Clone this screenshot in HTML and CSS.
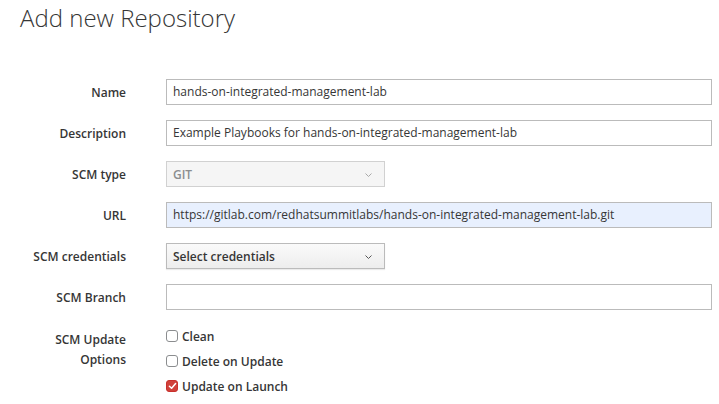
FILE: index.html
```html
<!DOCTYPE html>
<html>
<head>
<meta charset="utf-8">
<link rel="stylesheet" href="styles.css">
</head>
<body>
<h1 class="title">Add new Repository</h1>
<form class="form">
  <div class="row">
    <label class="label">Name</label>
    <div class="field"><div class="input wide">hands-on-integrated-management-lab</div></div>
  </div>
  <div class="row">
    <label class="label">Description</label>
    <div class="field"><div class="input wide">Example Playbooks for hands-on-integrated-management-lab</div></div>
  </div>
  <div class="row">
    <label class="label">SCM type</label>
    <div class="field"><div class="select disabled"><span>GIT</span><svg class="caret" width="7" height="4" viewBox="0 0 7 4"><path d="M0.5 0.5 L3.5 3.5 L6.5 0.5" fill="none" stroke="#a0a0a0" stroke-width="0.9"/></svg></div></div>
  </div>
  <div class="row">
    <label class="label">URL</label>
    <div class="field"><div class="input wide autofill">https://gitlab.com/redhatsummitlabs/hands-on-integrated-management-lab.git</div></div>
  </div>
  <div class="row">
    <label class="label">SCM credentials</label>
    <div class="field"><div class="select button"><span>Select credentials</span><svg class="caret" width="7" height="4" viewBox="0 0 7 4"><path d="M0.5 0.5 L3.5 3.5 L6.5 0.5" fill="none" stroke="#555" stroke-width="1"/></svg></div></div>
  </div>
  <div class="row">
    <label class="label">SCM Branch</label>
    <div class="field"><div class="input wide"></div></div>
  </div>
  <div class="row options">
    <label class="label multi">SCM Update<br>Options</label>
    <div class="checks">
      <div class="check"><span class="box"></span><span>Clean</span></div>
      <div class="check"><span class="box"></span><span>Delete on Update</span></div>
      <div class="check"><span class="box checked"><svg width="9" height="8" viewBox="0 0 9 8"><path d="M1.4 4.2 L3.6 6.3 L7.6 1.5" fill="none" stroke="#fff" stroke-width="1.5" stroke-linecap="round" stroke-linejoin="round"/></svg></span><span>Update on Launch</span></div>
    </div>
  </div>
</form>
</body>
</html>
```

FILE: styles.css
```css
html, body {
  margin: 0;
  padding: 0;
  background: #fff;
}
body {
  font-family: "Open Sans", "Liberation Sans", sans-serif;
  font-size: 12px;
  color: #363636;
  width: 719px;
  height: 404px;
  overflow: hidden;
}
.title {
  margin: 0;
  padding: 2px 0 0 20px;
  font-weight: 300;
  font-size: 24px;
  line-height: 32px;
  color: #363636;
}
.form {
  margin-top: 45px;
  display: flex;
  flex-direction: column;
  gap: 15px;
}
.row {
  display: grid;
  grid-template-columns: 126px 1fr;
  column-gap: 40px;
  align-items: center;
}
.label {
  text-align: right;
  font-weight: 600;
  color: #363636;
}
.field {
  padding-right: 7px;
}
.input {
  box-sizing: border-box;
  height: 26px;
  border: 1px solid #bbbbbb;
  padding: 0 6px;
  line-height: 24px;
  white-space: nowrap;
  overflow: hidden;
  background: #fff;
}
.autofill {
  background: #e8f0fe;
}
.select {
  box-sizing: border-box;
  width: 219px;
  height: 26px;
  border: 1px solid #bbbbbb;
  padding: 0 12px 0 6px;
  display: flex;
  align-items: center;
  justify-content: space-between;
}
.select.disabled {
  background: #f5f5f5;
  border-color: #d1d1d1;
  color: #8b8d8f;
  font-weight: 600;
}
.select.button {
  background: linear-gradient(#fafafa, #ededed);
  font-weight: 600;
  color: #363636;
  box-shadow: 0 1px 1px rgba(3,3,3,0.08);
}
.caret {
  display: block;
  margin-top: 1px;
}
.options {
  align-items: start;
  margin-top: 1px;
}
.label.multi {
  line-height: 20px;
  padding-top: 4px;
}
.checks {
  display: flex;
  flex-direction: column;
  gap: 5px;
}
.check {
  display: flex;
  align-items: center;
  gap: 4px;
  height: 20px;
  font-weight: 600;
  color: #363636;
}
.box {
  box-sizing: border-box;
  width: 12px;
  height: 12px;
  border: 1px solid #8b8d8f;
  border-radius: 3px;
  background: #fff;
  display: flex;
  align-items: center;
  justify-content: center;
}
.box.checked {
  background: #d0413a;
  border-color: #c9302c;
}
```
